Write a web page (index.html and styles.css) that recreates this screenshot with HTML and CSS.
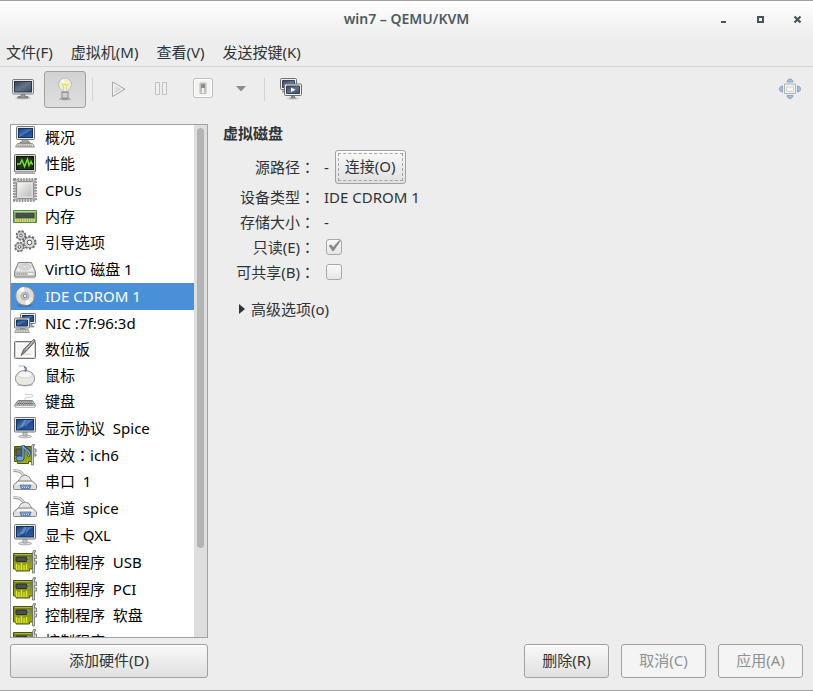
FILE: index.html
```
<!DOCTYPE html>
<html lang="zh-CN">

<head>
    <meta charset="UTF-8">
    <meta name="viewport" content="width=device-width, initial-scale=1.0">
    <title>win7 – QEMU/KVM</title>
    <link rel="stylesheet" href="styles.css">
</head>

<body>
    <div class="window">
        <header class="titlebar">
            <h1 class="title">win7 – QEMU/KVM</h1>
            <div class="window-buttons">
                <button type="button" aria-label="最小化"><svg width="9" height="9"><path d="M2 6h5v2H2z" fill="#44555c"/></svg></button>
                <button type="button" aria-label="最大化"><svg width="9" height="9"><path d="M2 2h5v5H2z" fill="none" stroke="#44555c" stroke-width="2"/></svg></button>
                <button type="button" aria-label="关闭"><svg width="9" height="9"><path d="M1.5 1.5l6 6m0-6l-6 6" fill="none" stroke="#44555c" stroke-width="2.2"/></svg></button>
            </div>
        </header>

        <nav class="menubar">
            <button type="button">文件(F)</button>
            <button type="button">虚拟机(M)</button>
            <button type="button">查看(V)</button>
            <button type="button">发送按键(K)</button>
        </nav>

        <div class="toolbar">
            <button type="button" class="tool" aria-label="控制台"><svg class="icon"><use href="#i-console"/></svg></button>
            <button type="button" class="tool active" aria-label="详情"><svg class="icon"><use href="#i-bulb"/></svg></button>
            <span class="separator"></span>
            <button type="button" class="tool" aria-label="运行"><svg class="icon"><use href="#i-play"/></svg></button>
            <button type="button" class="tool" aria-label="暂停"><svg class="icon"><use href="#i-pause"/></svg></button>
            <button type="button" class="tool" aria-label="关机"><svg class="icon"><use href="#i-power"/></svg></button>
            <button type="button" class="tool narrow" aria-label="关机选项"><svg width="10" height="6"><path d="M0 0h10L5 5.5z" fill="#8b8e8f"/></svg></button>
            <span class="separator"></span>
            <button type="button" class="tool" aria-label="快照"><svg class="icon"><use href="#i-snapshot"/></svg></button>
            <button type="button" class="tool last" aria-label="全屏"><svg class="icon"><use href="#i-fullscreen"/></svg></button>
        </div>

        <main class="content">
            <aside class="sidebar">
                <div class="list-box">
                    <ul class="hardware">
                        <li class="cjk"><svg class="icon"><use href="#i-computer"/></svg>概况</li>
                        <li class="cjk"><svg class="icon"><use href="#i-graph"/></svg>性能</li>
                        <li><svg class="icon"><use href="#i-cpu"/></svg>CPUs</li>
                        <li class="cjk"><svg class="icon"><use href="#i-memory"/></svg>内存</li>
                        <li class="cjk"><svg class="icon"><use href="#i-gears"/></svg>引导选项</li>
                        <li><svg class="icon"><use href="#i-disk"/></svg>VirtIO 磁盘 1</li>
                        <li class="selected"><svg class="icon"><use href="#i-cd"/></svg>IDE CDROM 1</li>
                        <li><svg class="icon"><use href="#i-network"/></svg>NIC :7f:96:3d</li>
                        <li class="cjk"><svg class="icon"><use href="#i-tablet"/></svg>数位板</li>
                        <li class="cjk"><svg class="icon"><use href="#i-mouse"/></svg>鼠标</li>
                        <li class="cjk"><svg class="icon"><use href="#i-keyboard"/></svg>键盘</li>
                        <li><svg class="icon"><use href="#i-display"/></svg>显示协议&nbsp; Spice</li>
                        <li><svg class="icon"><use href="#i-sound"/></svg>音效<span class="colon" lang="zh-TW">：</span>ich6</li>
                        <li class="cjk"><svg class="icon"><use href="#i-serial"/></svg>串口&nbsp; 1</li>
                        <li><svg class="icon"><use href="#i-serial"/></svg>信道&nbsp; spice</li>
                        <li><svg class="icon"><use href="#i-display"/></svg>显卡&nbsp; QXL</li>
                        <li><svg class="icon"><use href="#i-card"/></svg>控制程序&nbsp; USB</li>
                        <li><svg class="icon"><use href="#i-card"/></svg>控制程序&nbsp; PCI</li>
                        <li class="cjk"><svg class="icon"><use href="#i-card"/></svg>控制程序&nbsp; 软盘</li>
                        <li class="cjk"><svg class="icon"><use href="#i-card"/></svg>控制程序</li>
                    </ul>
                    <div class="scrollbar"><div class="thumb"></div></div>
                </div>
                <button type="button" class="btn">添加硬件(D)</button>
            </aside>

            <section class="details">
                <h2>虚拟磁盘</h2>
                <div class="form">
                    <span class="name">源路径<span class="colon" lang="zh-TW">：</span></span>
                    <div class="value source">-<button type="button" class="btn focused">连接(O)</button></div>
                    <span class="name">设备类型<span class="colon" lang="zh-TW">：</span></span>
                    <span class="value">IDE CDROM 1</span>
                    <span class="name">存储大小<span class="colon" lang="zh-TW">：</span></span>
                    <span class="value">-</span>
                    <label class="name" for="readonly">只读(E)<span class="colon" lang="zh-TW">：</span></label>
                    <div class="value"><input type="checkbox" id="readonly" checked></div>
                    <label class="name" for="shareable">可共享(B)<span class="colon" lang="zh-TW">：</span></label>
                    <div class="value"><input type="checkbox" id="shareable"></div>
                </div>
                <button type="button" class="expander"><svg width="6" height="10"><path d="M0 0l6 5-6 5z" fill="#2e3436"/></svg>高级选项(o)</button>
                <div class="actions">
                    <button type="button" class="btn">删除(R)</button>
                    <button type="button" class="btn" disabled>取消(C)</button>
                    <button type="button" class="btn" disabled>应用(A)</button>
                </div>
            </section>
        </main>
    </div>

    <svg class="defs" width="0" height="0">
        <defs>
            <linearGradient id="g-blue" x1="0" y1="0" x2="1" y2="1">
                <stop offset="0" stop-color="#173a76"/>
                <stop offset=".5" stop-color="#4478bb"/>
                <stop offset=".55" stop-color="#1f4a8c"/>
                <stop offset="1" stop-color="#2f62a8"/>
            </linearGradient>
            <linearGradient id="g-slate" x1="0" y1="0" x2="1" y2="1">
                <stop offset="0" stop-color="#33415c"/>
                <stop offset=".5" stop-color="#66758c"/>
                <stop offset="1" stop-color="#3a4964"/>
            </linearGradient>
            <linearGradient id="g-metal" x1="0" y1="0" x2="1" y2="1">
                <stop offset="0" stop-color="#f7f7f6"/>
                <stop offset="1" stop-color="#b9bab7"/>
            </linearGradient>
            <linearGradient id="g-olive" x1="0" y1="0" x2="0" y2="1">
                <stop offset="0" stop-color="#757e17"/>
                <stop offset="1" stop-color="#a5b312"/>
            </linearGradient>
        </defs>

        <symbol id="i-console" viewBox="0 0 24 24">
            <ellipse cx="12" cy="21" rx="8" ry="1.5" fill="#c6c6c4"/>
            <path d="M10 17h4v2.500h3v1.500H7v-1.500h3z" fill="#9a9c98" stroke="#696b67" stroke-width=".7"/>
            <rect x="1.500" y="2.500" width="21" height="14.500" rx="1.200" fill="#e8e8e5" stroke="#7d7f7c"/>
            <rect x="3.500" y="4.500" width="17" height="10.500" fill="url(#g-slate)" stroke="#2a354a"/>
        </symbol>

        <symbol id="i-bulb" viewBox="0 0 24 24">
            <ellipse cx="12" cy="22" rx="6" ry="1.300" fill="#a9a9a7"/>
            <path d="M12 1a6.500 6.500 0 0 0-6.500 6.500c0 3.500 3.100 4.700 3.600 7.500h5.800c.5-2.800 3.600-4 3.600-7.500A6.500 6.500 0 0 0 12 1z" fill="#ecece8" stroke="#b4b5b0" stroke-width=".8"/>
            <circle cx="12" cy="7.500" r="3.800" fill="#f7f4bd"/>
            <path d="M8.500 7l1.500 1.500L12 7l2 1.500L15.500 7" fill="none" stroke="#ebdd45" stroke-width="1.200"/>
            <path d="M10.500 9v5.500m3-5.500v5.500" fill="none" stroke="#c3c2b0" stroke-width=".7"/>
            <circle cx="9.500" cy="4" r="1.500" fill="#fff"/>
            <path d="M9 15h6v5.500L13.500 22h-3L9 20.500z" fill="#b4b5b1" stroke="#71736f" stroke-width=".8"/>
            <path d="M9.500 17h5M9.500 19h5" stroke="#eee"/>
        </symbol>

        <symbol id="i-play" viewBox="0 0 24 24">
            <path d="M5.500 5v14.500L18 12.200z" fill="url(#g-metal)" stroke="#a7a9a6" stroke-linejoin="round"/>
            <path d="M6.700 7v10.500l9-5.300z" fill="none" stroke="#fafafa"/>
        </symbol>

        <symbol id="i-pause" viewBox="0 0 24 24">
            <path d="M6.500 5.500h4v12h-4zM13.500 5.500h4v12h-4z" fill="#f0f0ef" stroke="#c0c1bf"/>
        </symbol>

        <symbol id="i-power" viewBox="0 0 24 24">
            <rect x="2.500" y="1.500" width="19" height="19" rx="2" fill="#f3f3f2" stroke="#bfc0be"/>
            <rect x="3.500" y="2.500" width="17" height="17" rx="1.500" fill="none" stroke="#fff"/>
            <path d="M9 6h6v10.500H9z" fill="#c3c4c2" stroke="#bcbdbb"/>
            <path d="M10 7h4v8h-4z" fill="#8c8e8b"/>
            <path d="M10.500 11h3v5h-3z" fill="#f0f0ef"/>
        </symbol>

        <symbol id="i-snapshot" viewBox="0 0 24 24">
            <rect x="1.500" y="1.500" width="16" height="11" rx="1" fill="#eeeeec" stroke="#6f716e"/>
            <path d="M3.500 3.500h12v7h-12z" fill="url(#g-slate)" stroke="#34415a"/>
            <path d="M3 13.500h3v2H3z" fill="#999"/>
            <ellipse cx="14" cy="21.500" rx="6" ry="1" fill="#c4c4c2"/>
            <path d="M12 18h4v2.500h1v1h-6v-1h1z" fill="#858783"/>
            <rect x="5.500" y="7" width="17" height="11.500" rx="1" fill="#eeeeec" stroke="#6f716e"/>
            <path d="M7.500 9h13v7.500h-13z" fill="url(#g-slate)" stroke="#34415a"/>
            <path d="M12 10.500v4.500l4.500-2.200z" fill="#fff"/>
        </symbol>

        <symbol id="i-fullscreen" viewBox="0 0 24 24">
            <g fill="#a9bdd8" stroke="#7b9ac4" stroke-width=".8">
                <path d="M9 5c0-4 6-4 6 0zM9 18.500c0 4 6 4 6 0zM4.500 9c-4 0-4 6 0 6zM19.500 9c4 0 4 6 0 6z"/>
            </g>
            <path d="M6.500 7h11v9.500h-11z" fill="#f5f5f4" stroke="#b0b1ad"/>
            <path d="M8.500 10h7v4.500h-7zM15 8.500h1" fill="none" stroke="#d0d1ce"/>
        </symbol>

        <symbol id="i-computer" viewBox="0 0 24 24">
            <path d="M9 14h6v3h2v1H7v-1h2z" fill="#a8aaa6" stroke="#777975" stroke-width=".7"/>
            <rect x="3.500" y="1.500" width="18" height="13" rx="1" fill="#e6e6e2" stroke="#747671"/>
            <rect x="5.500" y="3.500" width="14" height="9" fill="url(#g-blue)" stroke="#153160"/>
            <path d="M4.500 18.500h15l2 3.500H2.500z" fill="#e7e7e5" stroke="#91938f" stroke-linejoin="round"/>
            <path d="M5 20h14M4.500 21.200h15" stroke="#777975" stroke-width=".8" stroke-dasharray="1.500 .7"/>
        </symbol>

        <symbol id="i-graph" viewBox="0 0 24 24">
            <path d="M2 22h20v1H2z" fill="#aaa"/>
            <rect x="1.500" y="3.500" width="21" height="17.500" rx="1" fill="#d7d8d4" stroke="#686a67"/>
            <rect x="3.500" y="5.500" width="17" height="13" fill="#1b2b16" stroke="#0c1509"/>
            <path d="M4 9h16M4 12h16M4 15h16M8 6v12M12 6v12M16 6v12" stroke="#31502a" stroke-width=".6"/>
            <path d="M4 13h3l2-4 2.500 6.500 3-7.500 1.500 6.500 2-4 1 2.500h1" fill="none" stroke="#78e629" stroke-width="1.400"/>
        </symbol>

        <symbol id="i-cpu" viewBox="0 0 24 24">
            <rect x="1.700" y="1.700" width="20.600" height="20.600" fill="none" stroke="#6d6f6b" stroke-width="3" stroke-dasharray="1.600 1.200"/>
            <rect x="2" y="2" width="20" height="20" fill="none" stroke="#b4b5b2" stroke-width="1.300"/>
            <rect x="3.500" y="3.500" width="17" height="17" rx="1" fill="#d5d6d3" stroke="#8b8d89"/>
            <rect x="5" y="5" width="14" height="14" fill="url(#g-metal)" stroke="#eee" stroke-width=".7"/>
        </symbol>

        <symbol id="i-memory" viewBox="0 0 24 24">
            <path d="M.5 6.500h23v12H.5z" fill="#76a862" stroke="#56874a"/>
            <path d="M1 7.500h22" stroke="#b5d6a6"/>
            <path d="M3 9.500h8.500v4H3zM12.500 9.500H21v4h-8.500z" fill="#4a4d4b" stroke="#2d302e" stroke-width=".6"/>
            <path d="M2 16.500h20" stroke="#e6d768" stroke-width="3" stroke-dasharray="1.600 .7"/>
        </symbol>

        <symbol id="i-gears" viewBox="0 0 24 24">
            <g fill="none" stroke="#666864">
                <circle cx="8" cy="5.500" r="4" stroke-width="2.500" stroke-dasharray="2 1.140"/>
                <circle cx="6.500" cy="17" r="4" stroke-width="2.500" stroke-dasharray="2 1.140"/>
                <circle cx="16.500" cy="12.500" r="5.500" stroke-width="3" stroke-dasharray="2.100 1.350"/>
            </g>
            <g fill="#ddded9" stroke="#747671" stroke-width=".8">
                <circle cx="8" cy="5.500" r="3.800"/>
                <circle cx="6.500" cy="17" r="3.800"/>
                <circle cx="16.500" cy="12.500" r="5.300"/>
            </g>
            <g fill="#fff" stroke="#555753">
                <circle cx="8" cy="5.500" r="1.400"/>
                <circle cx="6.500" cy="17" r="1.400"/>
                <circle cx="16.500" cy="12.500" r="2.300"/>
            </g>
        </symbol>

        <symbol id="i-disk" viewBox="0 0 24 24">
            <path d="M2 20.500h20v1H2z" fill="#c9c9c7"/>
            <path d="M5.500 5.500h13l4 9v4.500q0 1-1 1h-19q-1 0-1-1v-4.500z" fill="#c4c5c2" stroke="#858783" stroke-linejoin="round"/>
            <path d="M6.200 6.500h11.600l3.400 8H2.800z" fill="#eeefed"/>
            <ellipse cx="12" cy="10" rx="6" ry="3" fill="#d9dad7" stroke="#b9bab7" stroke-width=".7"/>
            <ellipse cx="12" cy="9.700" rx="2" ry="1" fill="#fafafa" stroke="#aaa" stroke-width=".5"/>
            <path d="M4 17h9" stroke="#898b87" stroke-dasharray="1 1"/>
            <path d="M15 17h5.500" stroke="#eee" stroke-width="2"/>
        </symbol>

        <symbol id="i-cd" viewBox="0 0 24 24">
            <ellipse cx="12" cy="21.500" rx="8" ry="1.500" fill="#3c73b2"/>
            <circle cx="12" cy="12" r="9.300" fill="#deddd7" stroke="#8e8f89"/>
            <path d="M12 12L6 5a9 9 0 0 1 5-2zM12 12l6 7a9 9 0 0 1-5 2z" fill="#fff"/>
            <path d="M12 12L3.500 9.500a9 9 0 0 1 2-4zM12 12l8.500 2.500a9 9 0 0 1-2 4z" fill="#efe8cf"/>
            <circle cx="12" cy="12" r="4" fill="#c1c6cb" stroke="#a3a5a3" stroke-width=".7"/>
            <circle cx="12" cy="12" r="1.800" fill="#f6f9fc" stroke="#7286a3"/>
        </symbol>

        <symbol id="i-network" viewBox="0 0 24 24">
            <path d="M14 12h5v3h2v1h-9v-1h2z" fill="#aaaca8" stroke="#777975" stroke-width=".6"/>
            <rect x="7.500" y="2.500" width="15" height="10" rx="1" fill="#e6e6e2" stroke="#747671"/>
            <path d="M9.500 4.500h11v6h-11z" fill="url(#g-blue)" stroke="#153160"/>
            <path d="M7 16h5v2.500H7z" fill="#9a9c98"/>
            <rect x="1.500" y="7" width="15" height="10" rx="1" fill="#e6e6e2" stroke="#747671"/>
            <path d="M3.500 9h11v6h-11z" fill="url(#g-blue)" stroke="#153160"/>
            <path d="M3 18.500h12l1.500 3h-15z" fill="#e3e3e0" stroke="#8b8d89" stroke-width=".8"/>
            <path d="M3.500 20h11" stroke="#777" stroke-dasharray="1 .7"/>
        </symbol>

        <symbol id="i-tablet" viewBox="0 0 24 24">
            <rect x="1.500" y="4.500" width="21" height="17" rx="1" fill="#d6d7d4" stroke="#747671"/>
            <path d="M3.500 6.500h17v13h-17z" fill="#f7f7f6" stroke="#fff"/>
            <path d="M10 17h8" stroke="#ccc"/>
            <path d="M20.500 2.500q2 0 1.500 2L13 14.500l-5 4 2.500-6z" fill="#8c8e8a" stroke="#535551" stroke-width=".8"/>
            <path d="M20.500 3.500l-8 9.500" stroke="#d7d8d4"/>
        </symbol>

        <symbol id="i-mouse" viewBox="0 0 24 24">
            <ellipse cx="12" cy="22" rx="8.500" ry="1.500" fill="#c9c9c7"/>
            <path d="M5.500 3c3 .5 6-1.500 6.500 2v2" fill="none" stroke="#abada9"/>
            <path d="M12 7.500c6 0 9.500 4 9.500 8 0 4.500-3.500 7-9.500 7s-9.500-2.500-9.500-7c0-4 3.500-8 9.500-8z" fill="#e8e9e5" stroke="#8e908b"/>
            <path d="M5 13q2.500-4.500 7-4.500t7 4.500q-3.500 2-7 2t-7-2z" fill="#f8f8f7"/>
            <path d="M4 12.500q3.500 2.500 8 2.500t8-2.500" fill="none" stroke="#c7c8c4" stroke-width=".7"/>
            <path d="M11 3.500l2 1.500v2.500l-1 1" fill="none" stroke="#4778b5" stroke-width="1.500"/>
        </symbol>

        <symbol id="i-keyboard" viewBox="0 0 24 24">
            <path d="M12 11.500V9.500c0-2 8 0 8-3 0-1.500-4-1-8-1" fill="none" stroke="#babcb8" stroke-width=".8"/>
            <path d="M5 11.500h14.500l2.500 4v2.500H2v-2.500z" fill="#c8c9c6" stroke="#7e807c" stroke-linejoin="round"/>
            <path d="M5.500 13h13.500M4.500 14.500h15.500M3.500 16h17" stroke="#5f615e" stroke-dasharray="1.500 .6"/>
            <path d="M2.500 17.500h19" stroke="#eee"/>
        </symbol>

        <symbol id="i-display" viewBox="0 0 24 24">
            <ellipse cx="12" cy="20.500" rx="6.500" ry="1.300" fill="#e1e1df" stroke="#979995" stroke-width=".8"/>
            <path d="M10 15.500h4V20h-4z" fill="#c4c5c2" stroke="#898b87" stroke-width=".7"/>
            <rect x="1.500" y="1.500" width="21" height="14.500" rx="1" fill="#e8e8e5" stroke="#747671"/>
            <rect x="3.500" y="3.500" width="17" height="10.500" fill="url(#g-blue)" stroke="#153160"/>
            <path d="M7 11l4-7h3l-4 7zM12 11l4-7h1l-4 7z" fill="#7ca0d1" opacity=".6"/>
        </symbol>

        <symbol id="i-sound" viewBox="0 0 24 24">
            <path d="M1.500 3.500h17v15h-3v2h-11v-2h-3z" fill="url(#g-olive)" stroke="#4c5510"/>
            <path d="M3 6h6v7H3z" fill="#596064" stroke="#343d2c"/>
            <path d="M18.500 22V3.500l1-2h2v1.200h-1V22z" fill="#d0d1ce" stroke="#696b67" stroke-width=".8"/>
            <path d="M21 6h2v3h-2M21 11h2v2h-2" fill="#ddd" stroke="#666" stroke-width=".8"/>
            <path d="M10 15V2.500c1 3.500 6 3 6.500 7l-1 4" fill="none" stroke="#24518e" stroke-width="3"/>
            <ellipse cx="7" cy="15.500" rx="4" ry="2.700" fill="#719fcf" stroke="#24518e"/>
            <path d="M10 14.500V3c1 3.500 5.500 3 6.500 7l-1 3" fill="none" stroke="#83afe0" stroke-width="1.200"/>
        </symbol>

        <symbol id="i-serial" viewBox="0 0 24 24">
            <path d="M.5 1.500c6 0 8 1.500 11 6" fill="none" stroke="#979995" stroke-width="3"/>
            <path d="M.5 1.300c6 0 8 1.500 11 6" fill="none" stroke="#dcddda" stroke-width="1.500"/>
            <path d="M8 7.500q4-3 8 0l3 5H5z" fill="#e6e7e4" stroke="#8f918d"/>
            <path d="M5 12h14.500l4 4v3.500q0 1-1 1h-21q-1 0-1-1V16z" fill="#dedfdc" stroke="#858783"/>
            <path d="M5.500 13H19l2 2.500H3.500z" fill="#f8f8f7"/>
            <path d="M7 16h11l-1 3.500H8z" fill="#6088bf" stroke="#496fa5" stroke-width=".7"/>
            <path d="M8.500 17h8M9 18.500h7" stroke="#d6e3f4" stroke-width=".9" stroke-dasharray="1 1"/>
        </symbol>

        <symbol id="i-card" viewBox="0 0 24 24">
            <path d="M.5 3.500h19v15.500h-3v2H3v-2H.5z" fill="url(#g-olive)" stroke="#4c5510"/>
            <path d="M1.500 4.500h17" stroke="#a9b346"/>
            <rect x="3" y="7" width="11" height="4.500" rx="1" fill="#4c4f4d" stroke="#292c27"/>
            <path d="M14 7h3v1.500h-3zM14 10h3v1.500h-3z" fill="#6d94bd"/>
            <path d="M3.500 20v-6M6 20v-5M8.500 20v-7M11 20v-5M13.500 20v-6" stroke="#dce634" stroke-width="1.300"/>
            <path d="M19.500 23V3l1-2.500h2v1.500h-1V23z" fill="#d0d1ce" stroke="#696b67" stroke-width=".8"/>
            <path d="M21.500 5h2v3.500h-2M21.500 11h2v3h-2" fill="#ddd" stroke="#666" stroke-width=".8"/>
        </symbol>
    </svg>
</body>

</html>
```
FILE: styles.css
```
* {
    box-sizing: border-box;
}

body {
    margin: 0;
    background: #ededed;
    color: #2e3436;
    font: 15px/20px "Noto Sans", "Open Sans", "Noto Sans CJK SC", sans-serif;
}

button {
    padding: 0 0 2px;
    border: none;
    background: none;
    color: inherit;
    font: inherit;
    white-space: nowrap;
}

svg {
    display: block;
}

.window {
    display: flex;
    flex-direction: column;
    height: 100vh;
    border-top: 1px solid #a1a1a1;
    border-bottom: 1px solid #a1a1a1;
}

/* 标题栏 */
.titlebar {
    display: grid;
    grid-template-columns: 1fr auto 1fr;
    align-items: center;
    height: 38px;
    flex: none;
    padding-bottom: 2px;
    background: linear-gradient(#fff, #ededed);
}

.title {
    grid-column: 2;
    margin: 0;
    color: #4c5c63;
    font-size: 14px;
    font-weight: 600;
}

.window-buttons {
    display: flex;
    justify-content: flex-end;
    gap: 5px;
}

.window-buttons button {
    display: flex;
    justify-content: center;
    width: 32px;
    padding: 0;
}

/* 菜单 */
.menubar {
    display: flex;
    flex: none;
    gap: 18px;
    height: 28px;
    padding: 0 6px;
    border-bottom: 1px solid #d3d3d3;
}

.toolbar {
    display: flex;
    flex: none;
    align-items: center;
    padding: 4px 2px;
}

.tool {
    display: flex;
    align-items: center;
    justify-content: center;
    width: 42px;
    height: 37px;
    border: 1px solid transparent;
    border-radius: 3px;
}

.tool.active {
    border-color: #a1a1a1;
    background: linear-gradient(#d2d2d2, #dedede);
}

.tool.narrow {
    width: 34px;
}

.tool.last {
    margin-left: auto;
}

.separator {
    width: 1px;
    height: 23px;
    margin: 0 5px 0 6px;
    background: #d3d3d3;
}

.icon {
    flex: none;
    width: 24px;
    height: 24px;
}

.content {
    display: grid;
    flex: 1;
    grid-template-columns: 198px 1fr;
    gap: 15px;
    min-height: 0;
    padding: 12px 10px;
}

/* 硬件列表 */
.sidebar {
    display: flex;
    flex-direction: column;
    gap: 6px;
    min-height: 0;
}

.list-box {
    display: flex;
    flex: 1;
    min-height: 0;
    overflow: hidden;
    border: 1px solid #a1a1a1;
    background: #fff;
}

.hardware {
    flex: 1;
    margin: 0;
    padding: 0;
    list-style: none;
    color: #000;
}

.hardware li {
    display: flex;
    align-items: center;
    height: 27px;
    padding: 0 0 2px 2px;
    white-space: nowrap;
}

.hardware li.cjk {
    height: 26px;
}

.hardware .icon {
    margin-right: 8px;
}

.hardware .selected {
    background: #4a90d9;
    color: #fff;
}

.scrollbar {
    width: 13px;
    padding: 3px;
    background: #dedede;
}

.thumb {
    height: 83%;
    border-radius: 4px;
    background: #b2b4b5;
}

/* 全角冒号居中 */
.colon {
    display: inline-block;
    font-family: "Noto Sans CJK TC", sans-serif;
}

.btn {
    height: 34px;
    border: 1px solid #a1a1a1;
    border-radius: 3px;
    background: linear-gradient(#f9f9f9, #e0e0e0);
    box-shadow: inset 0 1px #fff;
}

.btn:disabled {
    background: #f4f4f4;
    color: #8e9192;
    box-shadow: none;
}

.btn.focused {
    padding: 0 9px 2px;
    outline: 1px dashed #a5a5a5;
    outline-offset: -4px;
}

.details {
    display: flex;
    flex-direction: column;
    align-items: flex-start;
}

h2 {
    margin: 0 0 8px;
    font-size: 15px;
    line-height: 18px;
}

.form {
    display: grid;
    grid-template-columns: 80px auto;
    grid-template-rows: 34px;
    grid-auto-rows: 25px;
    align-items: center;
    column-gap: 9px;
    margin-left: 12px;
}

.name {
    text-align: right;
    white-space: nowrap;
}

.source {
    display: flex;
    align-items: center;
    gap: 6px;
}

input[type="checkbox"] {
    display: block;
    width: 16px;
    height: 16px;
    margin: 0 2px;
    border: 1px solid #a8a8a8;
    border-radius: 3px;
    background: linear-gradient(#fafafa, #e6e6e6);
    appearance: none;
}

input[type="checkbox"]:checked::before {
    content: "";
    display: block;
    width: 14px;
    height: 12px;
    background: #888b8c;
    clip-path: polygon(12% 50%, 30% 42%, 44% 62%, 85% 8%, 100% 8%, 48% 95%, 38% 95%);
}

.expander {
    display: flex;
    align-items: center;
    gap: 6px;
    margin: 15px 0 0 16px;
}

.actions {
    display: flex;
    gap: 12px;
    margin-top: auto;
    margin-left: auto;
}

.actions .btn {
    width: 85px;
}
```
